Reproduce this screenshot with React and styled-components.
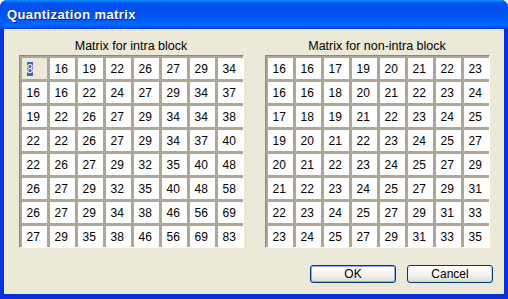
import React from "react";
import styled, { createGlobalStyle } from "styled-components";

const intra = [
  [8, 16, 19, 22, 26, 27, 29, 34],
  [16, 16, 22, 24, 27, 29, 34, 37],
  [19, 22, 26, 27, 29, 34, 34, 38],
  [22, 22, 26, 27, 29, 34, 37, 40],
  [22, 26, 27, 29, 32, 35, 40, 48],
  [26, 27, 29, 32, 35, 40, 48, 58],
  [26, 27, 29, 34, 38, 46, 56, 69],
  [27, 29, 35, 38, 46, 56, 69, 83],
];

const nonIntra = [
  [16, 16, 17, 19, 20, 21, 22, 23],
  [16, 16, 18, 20, 21, 22, 23, 24],
  [17, 18, 19, 21, 22, 23, 24, 25],
  [19, 20, 21, 22, 23, 24, 25, 27],
  [20, 21, 22, 23, 24, 25, 27, 29],
  [21, 22, 23, 24, 25, 27, 29, 31],
  [22, 23, 24, 25, 27, 29, 31, 33],
  [23, 24, 25, 27, 29, 31, 33, 35],
];

const GlobalStyle = createGlobalStyle`
  html, body {
    margin: 0;
    padding: 0;
    background: #fff;
  }
  body {
    font-family: "Liberation Sans", Arial, sans-serif;
  }
`;

const Window = styled.div`
  width: 508px;
  height: 299px;
  display: flex;
  flex-direction: column;
  box-sizing: border-box;
  border-radius: 7px 7px 0 0;
  overflow: hidden;
  background: #0831d9;
`;

const TitleBar = styled.div`
  height: 29px;
  flex: none;
  display: flex;
  align-items: center;
  padding-left: 7px;
  background: linear-gradient(
    to bottom,
    #0997ff 0%,
    #0053ee 10%,
    #0050ee 40%,
    #0066ff 86%,
    #005bff 93%,
    #003dd7 100%
  );
  color: #fff;
  font-weight: bold;
  font-size: 13px;
  letter-spacing: 0.4px;
  text-shadow: 1px 1px 0 #0a1883;
`;

const Body = styled.div`
  flex: 1;
  margin: 0 4px 5px 4px;
  background: #ece9d8;
  display: flex;
  flex-direction: column;
  padding: 8px 11px 0 13px;
`;

const Panels = styled.div`
  display: flex;
  gap: 18px;
`;

const Panel = styled.div`
  display: flex;
  flex-direction: column;
  align-items: center;
  width: 228px;
`;

const Label = styled.div`
  font-size: 12.5px;
  color: #000;
  height: 18px;
  line-height: 19px;
`;

const Grid = styled.div`
  display: grid;
  grid-template-columns: repeat(8, 25px);
  grid-auto-rows: 21px;
  gap: 3px;
  padding: 2px 0 0 2px;
  background: #aca899;
  border: 1px solid #fff;
  border-top-color: #8c8a7c;
  border-left-color: #8c8a7c;
`;

const Cell = styled.div`
  background: ${(p) => (p.$focused ? "#ece9d8" : "#fff")};
  font-size: 12px;
  color: #000;
  display: flex;
  align-items: center;
  padding-left: 5px;
`;

const Selected = styled.span`
  background: #316ac5;
  color: #fff;
  line-height: 14px;
`;

const Buttons = styled.div`
  display: flex;
  justify-content: flex-end;
  gap: 11px;
  margin-top: 17px;
`;

const Button = styled.button`
  width: 86px;
  height: 18px;
  padding: 0;
  border: 1px solid #003c74;
  border-radius: 3px;
  background: linear-gradient(to bottom, #ffffff 0%, #f4f3ee 60%, #dcd9cc 100%);
  font-family: "Liberation Sans", Arial, sans-serif;
  font-size: 12px;
  color: #000;
  box-shadow: ${(p) =>
    p.$default ? "inset 0 0 0 1px #91a7f4" : "inset -1px -1px 0 #d6d0c5"};
`;

const Matrix = ({ title, data, focusFirst }) => (
  <Panel>
    <Label>{title}</Label>
    <Grid>
      {data.flat().map((v, i) =>
        focusFirst && i === 0 ? (
          <Cell key={i} $focused>
            <Selected>{v}</Selected>
          </Cell>
        ) : (
          <Cell key={i}>{v}</Cell>
        )
      )}
    </Grid>
  </Panel>
);

const App = () => {
  return (
    <>
      <GlobalStyle />
      <Window>
        <TitleBar>Quantization matrix</TitleBar>
        <Body>
          <Panels>
            <Matrix title="Matrix for intra block" data={intra} focusFirst />
            <Matrix title="Matrix for non-intra block" data={nonIntra} />
          </Panels>
          <Buttons>
            <Button $default>OK</Button>
            <Button>Cancel</Button>
          </Buttons>
        </Body>
      </Window>
    </>
  );
};

export default App;
